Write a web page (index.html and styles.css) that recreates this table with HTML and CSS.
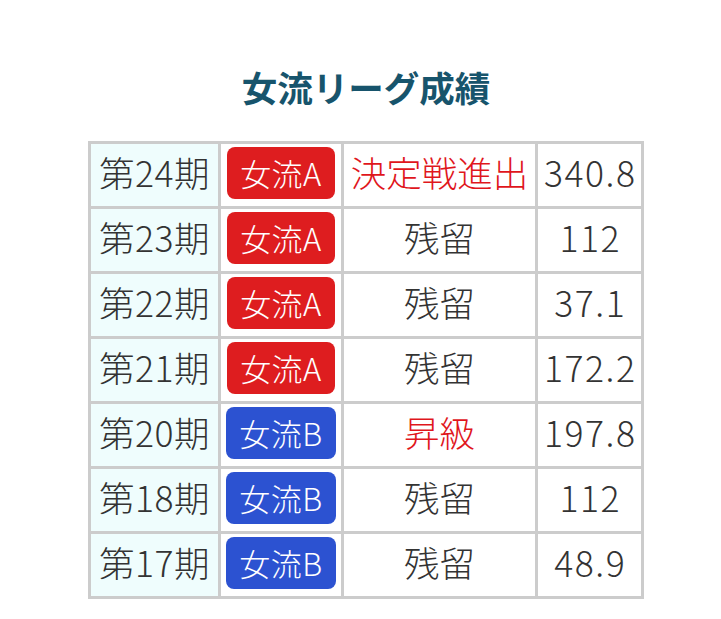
FILE: index.html
```html
<!DOCTYPE html>
<html lang="ja">
<head>
<meta charset="utf-8">
<title>女流リーグ成績</title>
<link rel="stylesheet" href="styles.css">
</head>
<body>
<div class="page">
  <h2 class="title">女流リーグ成績</h2>
  <table class="results">
    <colgroup>
      <col class="c-term"><col class="c-league"><col class="c-result"><col class="c-score">
    </colgroup>
    <tbody>
      <tr><td class="term">第24期</td><td><span class="badge red">女流A</span></td><td class="hl">決定戦進出</td><td class="num">340.8</td></tr>
      <tr><td class="term">第23期</td><td><span class="badge red">女流A</span></td><td>残留</td><td class="num">112</td></tr>
      <tr><td class="term">第22期</td><td><span class="badge red">女流A</span></td><td>残留</td><td class="num">37.1</td></tr>
      <tr><td class="term">第21期</td><td><span class="badge red">女流A</span></td><td>残留</td><td class="num">172.2</td></tr>
      <tr><td class="term">第20期</td><td><span class="badge blue">女流B</span></td><td class="hl">昇級</td><td class="num">197.8</td></tr>
      <tr><td class="term">第18期</td><td><span class="badge blue">女流B</span></td><td>残留</td><td class="num">112</td></tr>
      <tr><td class="term">第17期</td><td><span class="badge blue">女流B</span></td><td>残留</td><td class="num">48.9</td></tr>
    </tbody>
  </table>
</div>
</body>
</html>
```
FILE: styles.css
```css
html, body {
  margin: 0;
  padding: 0;
  background: #ffffff;
}
body {
  font-family: "Noto Sans CJK JP", "Noto Sans", sans-serif;
  color: #333333;
}
.page {
  display: flex;
  flex-direction: column;
  align-items: center;
  padding: 60px 0 0 11px;
}
.title {
  margin: 0 0 27px;
  font-size: 35.5px;
  line-height: 54px;
  font-weight: 700;
  color: #17546c;
}
.results {
  border-collapse: separate;
  border-spacing: 3px;
  background: #cccccc;
  table-layout: fixed;
  width: 556px;
}
.c-term { width: 127px; }
.c-league { width: 120px; }
.c-result { width: 191px; }
.c-score { width: 103px; }
.results td {
  background: #ffffff;
  height: 62px;
  padding: 0 0 6px;
  text-align: center;
  vertical-align: middle;
  font-size: 35.5px;
  font-weight: 300;
  line-height: 46px;
  box-sizing: border-box;
  white-space: nowrap;
}
.results td.term {
  background: #effdfd;
  letter-spacing: 0.5px;
}
.results td.num {
  letter-spacing: 1.5px;
  text-indent: 1.5px;
}
.results td.hl {
  color: #e0161c;
}
.badge {
  display: inline-block;
  box-sizing: border-box;
  height: 52px;
  padding: 6px 13px 0;
  border-radius: 8px;
  color: #ffffff;
  font-size: 31px;
  font-weight: 300;
  line-height: 40px;
  vertical-align: middle;
  letter-spacing: 0.5px;
}
.badge.red { background: #de1d1f; }
.badge.blue { background: #2c52d1; }
```
